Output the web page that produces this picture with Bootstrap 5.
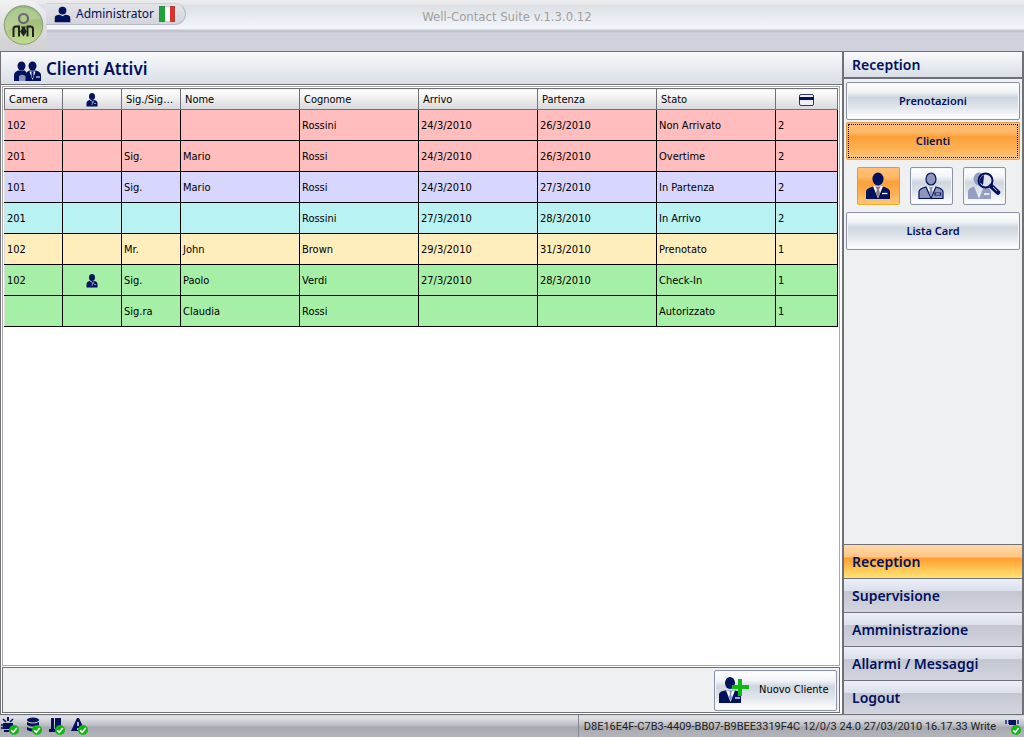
<!DOCTYPE html>
<html lang="it">
<head>
<meta charset="utf-8">
<meta name="viewport" content="width=device-width, initial-scale=1">
<title>Well-Contact Suite</title>
<link rel="stylesheet" href="https://cdn.jsdelivr.net/npm/bootstrap@5.3.0/dist/css/bootstrap.min.css">
<style>
:root{--navy:#00115e;--line:#707176;--steel:linear-gradient(#fff 0%,#f1f3f6 25%,#cdd6df 40%,#dfe4ea 65%,#fff 100%)}
body{font:11px/14px "DejaVu Sans Condensed","DejaVu Sans",sans-serif;color:#000;background:#cfd2dc}
.ui{font-family:"Noto Sans",sans-serif;color:var(--navy)}
.topbar{height:51px;background:linear-gradient(#ececee 0,#e8e8ea 4px,#dcdfe4 5px,#f3f6fa 29px,#c1c4cd 30px,#c1c4cd 32px,#cfd2dc 33px)}
.logo-box{width:47px;height:50px;background:linear-gradient(#f1f2f3,#d3d3d5 85%);border-radius:0 22px 0 0}
.user-tab{height:22px;margin-top:3px;width:140px;margin-left:-1px;padding-left:8px;gap:5px;border:1px solid #b9bcc3;border-top-color:#cfd1d6;border-left:0;border-radius:0 11px 11px 0;background:linear-gradient(#e3e4e8,#d3d5dc);font:12px/16px "Noto Sans",sans-serif;color:var(--navy)}
.app-title{top:9px;padding-right:10px;font:13px/16px "DejaVu Sans Condensed","DejaVu Sans",sans-serif;color:#a0a0a0}
.main-pane{border:1px solid var(--line);border-right:0;background:#fff}
.pane-head{height:33px;padding:2px 0 0 13px;border-bottom:1px solid var(--line);background:linear-gradient(#f8f9fb,#d9dee6)}
.pane-head h1{font-size:17px;line-height:24px;font-weight:600}
.grid-box{margin:1px 2px 0 1px;padding:1px;border:1px solid #a8a8aa}
.clients{table-layout:fixed;border-collapse:collapse;width:100%}
.clients th{height:21px;padding:2px 4px 0;font-weight:400;border:1px solid var(--line);background:linear-gradient(#fff,#f1f1f2 40%,#d7d8dc);overflow:hidden;white-space:nowrap;text-overflow:ellipsis}
.clients td{height:31px;padding:2px 2px 0;border:1px solid #000}
.clients td:first-child{border-left-color:#ddd}
.clients svg{display:block;margin:auto}
.w-first{width:58px}.w-narrow{width:59px}.w-card{width:62px}
.r-red{background:#ffbdbd}.r-lilac{background:#d6d6ff}.r-cyan{background:#b8f2f2}.r-sand{background:#ffedbb}.r-green{background:#a6efa6}
.pane-foot{height:46px;margin:1px 2px 1px 1px;padding:1px 2px;border:1px solid var(--line);background:#eff0f2}
.steel{background:var(--steel);border:1px solid #8a92a3;border-radius:2px;padding:0;box-shadow:inset 0 0 0 1px #f4f6f9}
.hot{background:linear-gradient(#ffc078 0%,#ffb868 25%,#fca03a 38%,#fdb052 70%,#ffc877 100%);border-color:#d89a4c;border-bottom-color:#f0ac2a;box-shadow:none}
.btn-new{width:123px;height:41px;font-size:11px;padding-left:4px}
.side{width:182px;border:2px solid var(--line);border-top-width:1px;border-bottom-width:1px;background:#eff0f2}
.side h2{height:27px;padding-left:8px;border-bottom:2px solid var(--line);font-size:14px;font-weight:600;line-height:26px;background:linear-gradient(#f8f9fb,#d9dee6)}
.side-btn{height:38px;font-size:11px;font-weight:600;line-height:16px}
.side-list{padding:3px 2px;gap:2px}
.focused{outline:1px dotted #000;outline-offset:-3px}
.tiles{gap:10px;padding:5px 4px 5px 0}
.tile{width:43px;height:38px}
.menu a{height:34px;padding-left:8px;border-top:1px solid var(--line);font-size:14px;font-weight:600;line-height:34px;text-decoration:none;background:linear-gradient(#eceffa 0%,#dce0eb 36%,#c4c6d2 38%,#d2d5e0 100%)}
.menu a.on{background:linear-gradient(#ffd9a8 0%,#ffc586 36%,#ff9e30 40%,#ffc855 75%,#ffe37a 100%)}
.status{height:22px;color:#222;background:linear-gradient(#d4d5d9 0%,#e2e3e8 10%,#b9bcc2 48%,#a6a9af 55%,#b3b5bb 100%)}
.status-text{border-left:1px solid #85878b;padding:2px 3px 0 5px;font-family:Roboto,sans-serif}
</style>
</head>
<body class="vh-100 d-flex flex-column">
<svg class="d-none" xmlns="http://www.w3.org/2000/svg">
  <symbol id="bust" viewBox="0 0 24 24"><circle cx="12" cy="6.500" r="5.500"/><path d="M1 23v-6c0-3 3-4.500 7-4.500l4 2 4-2c4 0 7 1.500 7 4.500v6z"/></symbol>
  <symbol id="suit" viewBox="0 0 26 28"><ellipse cx="13" cy="7" rx="5.600" ry="6.500"/><path d="M8 14h10l-5 13z" fill="#f3efee"/><path d="M1 27v-7c0-3 3-4 7-5.500l5 12 5-12c4 1.500 7 2.500 7 5.500v7z"/><path d="M10.500 14.500h5l-1.500 3 1 4-2 4-2-4 1-4z" fill="#8a7a86"/><path d="M17 21.500h5.500" stroke="#fff" stroke-width="1.300"/></symbol>
  <symbol id="guest" viewBox="0 0 12 14"><ellipse cx="6" cy="3.500" rx="3" ry="3.500"/><path d="M.5 13.500V10c0-1.500 1-2.500 3-3h5c2 .5 3 1.500 3 3v3.500z"/><path d="M4 7.500h1.500l1 1.500L6 12M8 7.500L7 10M8 10.500h2" fill="none" stroke="#c9cde0" stroke-width=".7"/></symbol>
  <symbol id="ok" viewBox="0 0 10 10"><circle cx="5" cy="5" r="5" fill="#12b512"/><path d="M2.200 5.200l2 2L7.800 3" fill="none" stroke="#fff" stroke-width="1.600"/></symbol>
</svg>

<header class="topbar position-relative d-flex align-items-start flex-shrink-0">
  <div class="logo-box">
    <svg width="47" height="50" viewBox="0 0 47 50" aria-hidden="true">
      <defs><linearGradient id="lg" x2="0" y2="1"><stop stop-color="#93b876"/><stop offset=".5" stop-color="#a5c27c"/><stop offset="1" stop-color="#c4dc8e"/></linearGradient></defs>
      <circle cx="23.500" cy="25" r="19.300" fill="url(#lg)" stroke="#8b9b78"/>
      <path d="M5 23A19 19 0 0 1 41 19Q24 18 6 31Z" fill="#fff" opacity=".2"/>
      <circle cx="23.500" cy="18.500" r="4.500" fill="none" stroke="#686868" stroke-width="2.200"/>
      <path d="M13.500 37v-8q0-2.500 2.500-2.500h3v10M33 37v-8q0-2.500-2.500-2.500h-3v10" fill="none" stroke="#222" stroke-width="2"/>
      <path d="M21 26.500h5l-1 2 2 3-3.500 5-3.500-5 2-3z" fill="#222"/>
    </svg>
  </div>
  <div class="user-tab d-flex align-items-center">
    <svg width="17" height="17" fill="#00115e" aria-hidden="true"><use href="#bust"/></svg>
    <span>Administrator</span>
    <svg width="16" height="16" aria-hidden="true"><path fill="#1da53c" d="M0 0h6v16H0z"/><path fill="#fff" d="M6 0h5v16H6z"/><path fill="#e03328" d="M11 0h5v16h-5z"/><path d="M.5.500h15v15H.5z" fill="none" stroke="#555" opacity=".3"/></svg>
  </div>
  <div class="app-title position-absolute start-0 end-0 text-center">Well-Contact Suite v.1.3.0.12</div>
</header>

<div class="d-flex flex-grow-1">
  <main class="main-pane flex-grow-1 d-flex flex-column">
    <div class="pane-head d-flex align-items-center gap-1 ui">
      <svg class="mt-1" width="28" height="20" viewBox="0 0 28 20" fill="#00115e" aria-hidden="true">
        <ellipse cx="7.500" cy="5" rx="4" ry="4.500"/><ellipse cx="18.500" cy="5" rx="4" ry="4.500"/>
        <path d="M0 20v-6c0-2 2-4 4-4.500h7l2 3V20z"/><path d="M5 20v-5l3-1.500 4 1.500v5z" fill="#8b93bb"/>
        <path d="M11.500 20v-6c0-2 2-4 4-4.500h6.500c3 .5 5 2.500 5 4.500v6z"/><path d="M15.500 10.500h6L18.500 19z" fill="#fff"/><path d="M17.500 10.500h2v5l-1 2-1-2z"/><path d="M22 16h4" stroke="#fff"/>
      </svg>
      <h1 class="m-0">Clienti Attivi</h1>
    </div>
    <div class="grid-box flex-grow-1">
      <table class="clients">
        <colgroup><col class="w-first"><col class="w-narrow"><col class="w-narrow"><col><col><col><col><col><col class="w-card"></colgroup>
        <thead><tr><th scope="col">Camera</th><th scope="col" aria-label="Ospite"><svg width="12" height="14" fill="#00115e"><use href="#guest"/></svg></th><th scope="col">Sig./Sig.ra</th><th scope="col">Nome</th><th scope="col">Cognome</th><th scope="col">Arrivo</th><th scope="col">Partenza</th><th scope="col">Stato</th><th scope="col" aria-label="Card"><svg width="16" height="12"><rect x=".5" y=".5" width="14" height="11" rx="1.500" fill="#eef0f6" stroke="#2a3670"/><path fill="#00115e" d="M0 3h15v3H0z"/></svg></th></tr></thead>
        <tbody>
          <tr class="r-red"><td>102</td><td></td><td></td><td></td><td>Rossini</td><td>24/3/2010</td><td>26/3/2010</td><td>Non Arrivato</td><td>2</td></tr>
          <tr class="r-red"><td>201</td><td></td><td>Sig.</td><td>Mario</td><td>Rossi</td><td>24/3/2010</td><td>26/3/2010</td><td>Overtime</td><td>2</td></tr>
          <tr class="r-lilac"><td>101</td><td></td><td>Sig.</td><td>Mario</td><td>Rossi</td><td>24/3/2010</td><td>27/3/2010</td><td>In Partenza</td><td>2</td></tr>
          <tr class="r-cyan"><td>201</td><td></td><td></td><td></td><td>Rossini</td><td>27/3/2010</td><td>28/3/2010</td><td>In Arrivo</td><td>2</td></tr>
          <tr class="r-sand"><td>102</td><td></td><td>Mr.</td><td>John</td><td>Brown</td><td>29/3/2010</td><td>31/3/2010</td><td>Prenotato</td><td>1</td></tr>
          <tr class="r-green"><td>102</td><td><svg width="12" height="14" fill="#00115e" aria-hidden="true"><use href="#guest"/></svg></td><td>Sig.</td><td>Paolo</td><td>Verdi</td><td>27/3/2010</td><td>28/3/2010</td><td>Check-In</td><td>1</td></tr>
          <tr class="r-green"><td></td><td></td><td>Sig.ra</td><td>Claudia</td><td>Rossi</td><td></td><td></td><td>Autorizzato</td><td>1</td></tr>
        </tbody>
      </table>
    </div>
    <div class="pane-foot d-flex justify-content-end align-items-center">
      <button type="button" class="btn-new steel d-flex align-items-center">
        <svg width="32" height="28" viewBox="0 0 32 28" fill="#00115e" aria-hidden="true"><ellipse cx="11" cy="7" rx="5" ry="6"/><path d="M0 27v-8c0-3 3-4 6-4.500h10c3 .5 6 1.500 6 4.500v8z"/><path d="M7 14.500h9L11.500 26z" fill="#f4f6fa"/><path d="M10.500 15h2.500l-1 3 1 3-1.500 4-1.500-4 1-3z" fill="#8b93bb"/><path d="M16 22h5" stroke="#fff" stroke-width="1.300"/><path d="M19 3h4v6h7v4h-7v7h-4v-7h-6V9h6z" fill="#10b90f"/></svg>
        <span class="ms-2">Nuovo Cliente</span>
      </button>
    </div>
  </main>

  <aside class="side d-flex flex-column flex-shrink-0 ui">
    <h2 class="m-0">Reception</h2>
    <div class="side-list flex-grow-1 d-flex flex-column">
      <button type="button" class="side-btn steel ui w-100">Prenotazioni</button>
      <button type="button" class="side-btn steel hot focused ui w-100">Clienti</button>
      <div class="tiles d-flex justify-content-center">
        <button type="button" class="tile steel hot" aria-label="Clienti attivi"><svg width="26" height="28" fill="#00115e"><use href="#suit"/></svg></button>
        <button type="button" class="tile steel" aria-label="Clienti passati"><svg width="26" height="28" viewBox="0 0 26 28" fill="#8e97bb" stroke="#00115e" stroke-width="1.200"><ellipse cx="13" cy="7" rx="5" ry="6"/><path d="M8 15h10l-5 11z" fill="#f3f5f8" stroke="none"/><path d="M1 26.500V20c0-3 3-4 7-5l5 11 5-11c4 1 7 2 7 5v6.500z"/><path d="M11 15h4l-1 3 1 3-2 4-2-4 1-3z" stroke="none"/><path d="M17 21h5.500v2H17z" fill="#fff"/></svg></button>
        <button type="button" class="tile steel" aria-label="Cerca cliente"><svg width="34" height="28" viewBox="0 0 34 28"><g fill="#949dc2"><ellipse cx="12" cy="7" rx="5.500" ry="6.500"/><path d="M1 27v-7c0-3 3-4.500 6-5.500l5 12 5-12c4 1 7 2.500 7 5.500v7z"/></g><path d="M17 22h5.500" stroke="#fff" stroke-width="1.500"/><circle cx="18.500" cy="8.500" r="7" fill="#dde3ed" fill-opacity=".75" stroke="#00115e" stroke-width="2"/><path d="M12.500 10q0-5 4.500-7l-1 10z" fill="#00115e"/><path d="M24 14l7 6.500" stroke="#00115e" stroke-width="4.500" stroke-linecap="round"/><path d="M26 15l4 4" stroke="#b7bdd2"/></svg></button>
      </div>
      <button type="button" class="side-btn steel ui w-100">Lista Card</button>
    </div>
    <nav class="menu d-flex flex-column">
      <a class="ui on" href="#">Reception</a>
      <a class="ui" href="#">Supervisione</a>
      <a class="ui" href="#">Amministrazione</a>
      <a class="ui" href="#">Allarmi / Messaggi</a>
      <a class="ui" href="#">Logout</a>
    </nav>
  </aside>
</div>

<footer class="status d-flex align-items-stretch justify-content-between flex-shrink-0">
  <div class="d-flex align-items-center gap-1">
    <svg width="19" height="18" viewBox="0 0 19 18" fill="#00115e" aria-hidden="true"><path d="M3 6h10v6H3zM4 13h7v2H4zM7 0h2v4H7z"/><path d="M3 2l3 3M13 2l-3 3M1 8h3M1 11h3" stroke="#00115e" stroke-width="1.500"/><use href="#ok" x="9" y="8" width="10" height="10"/></svg>
    <svg width="19" height="18" viewBox="0 0 19 18" fill="#00115e" aria-hidden="true"><ellipse cx="10" cy="3" rx="6" ry="2.500"/><path d="M4 5q6 3 12 0v3q-6 3-12 0zM4 10q6 3 12 0v3q-6 3-12 0z"/><use href="#ok" x="9" y="8" width="10" height="10"/></svg>
    <svg width="19" height="18" viewBox="0 0 19 18" fill="#00115e" aria-hidden="true"><path d="M5 1h3v11H5zM9 1h6v12H9zM3 12h12v3H3z"/><use href="#ok" x="9" y="8" width="10" height="10"/></svg>
    <svg width="19" height="18" viewBox="0 0 19 18" fill="#00115e" aria-hidden="true"><path d="M8 1h2l6 13H2z"/><path d="M9 5v4M9 11v2" stroke="#dfe3ee" stroke-width="1.500"/><use href="#ok" x="9" y="8" width="10" height="10"/></svg>
  </div>
  <div class="status-text d-flex align-items-center gap-1">
    <span>D8E16E4F-C7B3-4409-BB07-B9BEE3319F4C 12/0/3 24.0 27/03/2010 16.17.33 Write</span>
    <svg class="ms-1" width="17" height="18" viewBox="0 0 17 18" aria-hidden="true"><path d="M1 3h14M1 5h14" stroke="#1b2a78" stroke-width="1.500" stroke-dasharray="2 1"/><path fill="#00115e" d="M5 2h7v5H5z"/><use href="#ok" x="7" y="7" width="10" height="10"/></svg>
  </div>
</footer>
<script src="https://cdn.jsdelivr.net/npm/bootstrap@5.3.0/dist/js/bootstrap.bundle.min.js"></script>
</body>
</html>
